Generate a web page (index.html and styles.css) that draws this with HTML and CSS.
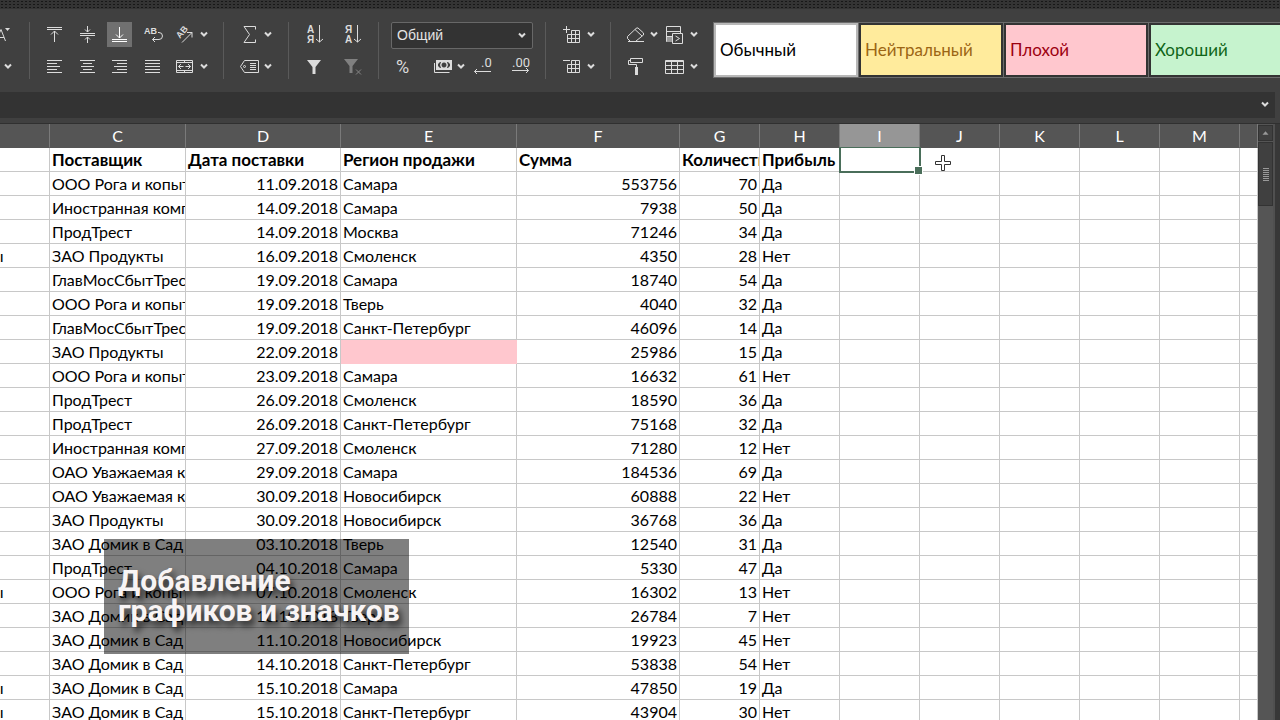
FILE: index.html
```
<!DOCTYPE html>
<html lang="ru">
  <head>
    <meta charset="UTF-8" />
    <title>Таблица продаж</title>
    <meta name="viewport" content="width=device-width, initial-scale=1.0" />
    <link rel="stylesheet" href="styles.css">
  </head>
  <body>
    <!-- shared chevron -->
    <svg class="defs">
      <symbol id="chev" viewBox="0 0 12 25"><path d="M3 10.500l3 3 3-3" stroke-width="2" /></symbol>
    </svg>

    <div class="window-top"></div>
    <div class="ribbon">
      <div class="group group-cut">
        <div class="row">
          <button class="drop" aria-label="Размер шрифта"><svg viewBox="0 0 12 25"><path d="M-4 19L1 7.500L5.500 19M-2 15.500H4" /><path class="fill" d="M5 6h5L7.500 9z" /></svg></button>
        </div>
        <div class="row">
          <button class="drop" aria-label="Ещё"><svg><use href="#chev" /></svg></button>
        </div>
      </div>

      <div class="group group-align">
        <div class="row">
          <button class="tool" aria-label="По верхнему краю"><svg viewBox="0 0 25 25"><path d="M6 5.500H21M6 7.500H21M13.500 20V9M10 12.500l3.500-3.500 3.500 3.500" /></svg></button>
          <button class="tool" aria-label="По середине"><svg viewBox="0 0 25 25"><path d="M6 11.500H21M6 13.500H21M13.500 4v6M11 7.500l2.500 2.500L16 7.500M13.500 21v-6M11 17.500l2.500-2.500 2.500 2.500" /></svg></button>
          <button class="tool active" aria-label="По нижнему краю"><svg viewBox="0 0 25 25"><path d="M5 17.500H20M5 19.500H20M12.500 5v11M9 12.500l3.500 3.500 3.500-3.500" /></svg></button>
          <button class="tool" aria-label="Перенос текста"><svg viewBox="0 0 25 25"><text x="4" y="12" class="t-small">AB</text><path d="M18 10.500h1a3 3 0 0 1 0 7H12.500M15 15l-2.500 2.500L15 20" /></svg></button>
          <div class="pair">
            <button class="tool" aria-label="Ориентация"><svg viewBox="0 0 25 25"><text x="7" y="17" class="t-small" transform="rotate(-50 7 17)">AB</text><path d="M9 20.500L19 10.500M14 10.500h5v5" /></svg></button>
            <button class="drop" aria-label="Ещё"><svg><use href="#chev" /></svg></button>
          </div>
        </div>
        <div class="row">
          <button class="tool" aria-label="По левому краю"><svg viewBox="0 0 25 25"><path d="M6 6.500h15M6 9.500h10M6 12.500h13M6 15.500h10M6 18.500h15" /></svg></button>
          <button class="tool" aria-label="По центру"><svg viewBox="0 0 25 25"><path d="M6 6.500h15M9 9.500h9M7 12.500h13M9 15.500h9M6 18.500h15" /></svg></button>
          <button class="tool" aria-label="По правому краю"><svg viewBox="0 0 25 25"><path d="M5 6.500h15M10 9.500h10M7 12.500h13M10 15.500h10M5 18.500h15" /></svg></button>
          <button class="tool" aria-label="По ширине"><svg viewBox="0 0 25 25"><path d="M5 6.500h15M5 9.500h15M5 12.500h15M5 15.500h15M5 18.500h15" /></svg></button>
          <div class="pair">
            <button class="tool" aria-label="Объединить"><svg viewBox="0 0 25 25"><path d="M3.500 6.500h16v12h-16zM3.500 8.500h16M3.500 16.500h16M11.500 6v2M11.500 17v2M5.500 12.500h5M8 10l-2.500 2.500L8 15M12.500 12.500h5M15 10l2.500 2.500L15 15" /></svg></button>
            <button class="drop" aria-label="Ещё"><svg><use href="#chev" /></svg></button>
          </div>
        </div>
      </div>

      <div class="group group-sum">
        <div class="row">
          <div class="pair">
            <button class="tool" aria-label="Сумма"><svg viewBox="0 0 25 25"><path d="M18.500 7.500V4.500H7L12.500 12.500L7 20.500H18.500V17.500" /></svg></button>
            <button class="drop" aria-label="Ещё"><svg><use href="#chev" /></svg></button>
          </div>
        </div>
        <div class="row">
          <div class="pair">
            <button class="tool" aria-label="Имена"><svg viewBox="0 0 25 25"><path d="M7.500 6.500h14v12h-14L3.500 12.500zM13 9.500h6M13 11.500h6M13 13.500h6M13 15.500h6" /><circle cx="7.500" cy="12.500" r="1" /></svg></button>
            <button class="drop" aria-label="Ещё"><svg><use href="#chev" /></svg></button>
          </div>
        </div>
      </div>

      <div class="group group-sort">
        <div class="row">
          <button class="tool" aria-label="По возрастанию"><svg viewBox="0 0 25 25"><text x="5" y="11" class="t-sort">А</text><text x="5" y="21" class="t-sort">Я</text><path d="M17.500 3v17M14 17l3.500 3 3.500-3" /></svg></button>
          <button class="tool" aria-label="По убыванию"><svg viewBox="0 0 25 25"><text x="6" y="11" class="t-sort">Я</text><text x="6" y="21" class="t-sort">А</text><path d="M18.500 3v17M15 17l3.500 3 3.500-3" /></svg></button>
        </div>
        <div class="row">
          <button class="tool" aria-label="Фильтр"><svg viewBox="0 0 25 25"><path class="fill" d="M5 6h14l-5.500 7v7h-3v-7z" /></svg></button>
          <button class="tool off" aria-label="Очистить фильтр"><svg viewBox="0 0 25 25"><path class="fill" d="M5 5h14l-5.500 7v7h-3v-7z" /><path d="M17 15.500l5 5M22 15.500l-5 5" /></svg></button>
        </div>
      </div>

      <div class="group group-format">
        <div class="row">
          <div class="format">
            <select aria-label="Числовой формат"><option>Общий</option></select>
            <svg><use href="#chev" /></svg>
          </div>
        </div>
        <div class="row">
          <button class="tool percent" aria-label="Процентный формат"><svg viewBox="0 0 25 25"><text x="5" y="19" class="t-percent">%</text></svg></button>
          <div class="pair">
            <button class="tool" aria-label="Денежный формат"><svg viewBox="0 0 25 25"><path class="fill" fill-rule="evenodd" d="M6 6h16v10H6zM8 10l2-2h1l-1 3 1 3h-1l-2-2zM20 10l-2-2h-1l1 3-1 3h1l2-2zM14 8.500a2.500 2.500 0 1 0 .01 0z" /><path d="M4.500 9V18.500H19.500" /></svg></button>
            <button class="drop" aria-label="Ещё"><svg><use href="#chev" /></svg></button>
          </div>
          <button class="tool" aria-label="Уменьшить разрядность"><svg viewBox="0 0 25 25"><text x="11" y="13" class="t-num">.0</text><path d="M21 17.500H4.500M7 15l-2.500 2.500L7 20" /></svg></button>
          <button class="tool last" aria-label="Увеличить разрядность"><svg viewBox="0 0 25 25"><text x="4" y="13" class="t-num">.00</text><path d="M4 16.500H20.500M18 14l2.500 2.500L18 19" /></svg></button>
        </div>
      </div>

      <div class="group group-cells">
        <div class="row">
          <div class="pair">
            <button class="tool" aria-label="Вставить ячейки"><svg viewBox="0 0 25 25"><path d="M3 7.500h7M6.500 4v7M11.500 8.500h8v12h-12v-8M7.500 12.500h12M7.500 16.500h12M11.500 8.500v12M15.500 8.500v12" /></svg></button>
            <button class="drop" aria-label="Ещё"><svg><use href="#chev" /></svg></button>
          </div>
        </div>
        <div class="row">
          <div class="pair">
            <button class="tool" aria-label="Удалить ячейки"><svg viewBox="0 0 25 25"><path d="M3 6.500h7M11.500 6.500h8v12h-12v-8M7.500 10.500h12M7.500 14.500h12M11.500 6.500v12M15.500 6.500v12" /></svg></button>
            <button class="drop" aria-label="Ещё"><svg><use href="#chev" /></svg></button>
          </div>
        </div>
      </div>

      <div class="group group-style">
        <div class="row">
          <div class="pair">
            <button class="tool" aria-label="Очистить"><svg viewBox="0 0 25 25"><path d="M5 19.500H21M7 19L4.500 16.500V14.500L13 6.500Q14 5.500 15 6L20.500 11V13L13 19M12 7.500l7 6.500" /></svg></button>
            <button class="drop" aria-label="Ещё"><svg><use href="#chev" /></svg></button>
          </div>
          <div class="pair">
            <button class="tool" aria-label="Условное форматирование"><svg viewBox="0 0 25 25"><path class="shade" d="M3 14h7v6H3z" /><path d="M17.500 11V4.500h-14V19.500M3.500 9.500h14M3.500 14.500h6M9.500 11.500h10v10h-10zM12.500 14l4 2.500-4 2.500" /></svg></button>
            <button class="drop" aria-label="Ещё"><svg><use href="#chev" /></svg></button>
          </div>
        </div>
        <div class="row">
          <button class="tool painter" aria-label="Формат по образцу"><svg viewBox="0 0 25 25"><path d="M7.500 4.500h12v4h-12zM7.500 6.500h-2v4h8V13" /><path class="fill" d="M12 13h3v8h-3z" /></svg></button>
          <div class="pair">
            <button class="tool" aria-label="Форматировать как таблицу"><svg viewBox="0 0 25 25"><path d="M2.500 6.500h18v13h-18zM2.500 7.500h18M2.500 11.500h18M2.500 15.500h18M8.500 7v12M14.500 7v12" /></svg></button>
            <button class="drop" aria-label="Ещё"><svg><use href="#chev" /></svg></button>
          </div>
        </div>
      </div>

      <div class="styles">
        <button class="style normal">Обычный</button>
        <button class="style neutral">Нейтральный</button>
        <button class="style bad">Плохой</button>
        <button class="style good">Хороший</button>
      </div>
    </div>

    <div class="formula">
      <button class="drop" aria-label="Развернуть строку формул"><svg><use href="#chev" /></svg></button>
    </div>

    <div class="work">
      <div class="sheet">
        <table>
          <colgroup>
            <col class="w-b"><col class="w-c"><col class="w-d"><col class="w-e"><col class="w-f">
            <col class="w-g"><col class="w-g"><col class="w-g"><col class="w-g"><col class="w-g"><col class="w-g"><col class="w-g">
            <col>
          </colgroup>
          <thead>
            <tr>
              <th></th><th>C</th><th>D</th><th>E</th><th>F</th><th>G</th><th>H</th>
              <th class="current">I</th><th>J</th><th>K</th><th>L</th><th>M</th><th></th>
            </tr>
          </thead>
          <tbody id="rows">
            <tr class="titles">
              <td></td><td>Поставщик</td><td>Дата поставки</td><td>Регион продажи</td><td>Сумма</td><td>Количество</td><td>Прибыль</td>
              <td class="selected"></td><td></td><td></td><td></td><td></td><td></td>
            </tr>
          </tbody>
        </table>
        <svg class="cursor" viewBox="0 0 18 18"><path d="M7.500 1.500h3v6h6v3h-6v6h-3v-6h-6v-3h6z" /></svg>
        <div class="caption">Добавление<br />графиков и значков</div>
      </div>
      <div class="scroll">
        <button class="scroll-up" aria-label="Вверх"><svg viewBox="0 0 15 15"><path d="M4 9h7L7.500 5z" /></svg></button>
        <div class="thumb"><span class="grip"></span></div>
      </div>
      <div class="edge"></div>
    </div>

    <script src="script.js"></script>
  </body>
</html>
```
FILE: styles.css
```
* {
  box-sizing: border-box;
}

body {
  margin: 0;
  height: 100vh;
  overflow: hidden;
  display: flex;
  flex-direction: column;
  background-color: #404040;
  font-family: Lato, "Noto Sans", sans-serif;
  font-size: 16px;
}

button {
  padding: 0;
  border: none;
  background: none;
  font: inherit;
}

svg {
  display: block;
  fill: none;
  stroke: #dcdcdc;
}

.defs {
  position: absolute;
  width: 0;
  height: 0;
}

.window-top {
  flex: none;
  height: 9px;
  background-color: #343434;
  background-image: radial-gradient(#181818 1px, transparent 1px);
  background-size: 4px 3px;
}

/* ribbon */
.ribbon {
  flex: none;
  display: flex;
  align-items: flex-start;
  padding: 13px 0;
  overflow: hidden;
}

.group {
  flex: none;
  display: flex;
  flex-direction: column;
  gap: 7px;
  border-right: 1px solid #5a5a5a;
}

.row {
  display: flex;
  height: 25px;
}

.pair {
  display: flex;
}

.tool,
.tool svg {
  width: 25px;
  height: 25px;
}

.drop,
.drop svg {
  width: 12px;
  height: 25px;
}

.tool.active {
  background-color: #707070;
}

.active svg {
  stroke: #fff;
}

.off svg {
  stroke: #858585;
}

.fill {
  fill: #dcdcdc;
  stroke: none;
}

.off .fill {
  fill: #808080;
}

.shade {
  fill: #999;
  stroke: none;
}

.ribbon text {
  fill: #dcdcdc;
  stroke: none;
  font-family: "Liberation Sans", sans-serif;
}

.ribbon .t-small {
  font-size: 9px;
  font-weight: bold;
}

.ribbon .t-sort {
  font-size: 10px;
  font-weight: bold;
}

.ribbon .t-percent {
  font-family: Roboto, sans-serif;
  font-size: 18px;
}

.ribbon .t-num {
  font-family: Roboto, sans-serif;
  font-size: 13px;
}

.group-cut {
  width: 30px;
}

.group-cut .row {
  padding-left: 2px;
}

.group-cut .row:first-child {
  padding-left: 0;
}

.group-align {
  padding: 0 13px 0 11px;
}

.group-align .row {
  gap: 8px;
}

.group-sum {
  padding: 0 14px 0 13px;
}

.group-sort {
  padding: 0 14px 0 13px;
}

.group-sort .row {
  gap: 12px;
}

.group-format {
  padding: 0 12px;
}

.group-format .row,
.group-style .row {
  gap: 3px;
}

.percent {
  margin-right: 11px;
}

.last {
  margin-left: auto;
}

.painter {
  margin-right: 12px;
}

.format {
  position: relative;
  width: 142px;
}

.format select {
  width: 100%;
  height: 27px;
  padding: 0 5px 1px;
  appearance: none;
  border: 1px solid #686868;
  border-radius: 2px;
  background-color: #333;
  color: #e4e4e4;
  font-family: "Liberation Sans", sans-serif;
  font-size: 14px;
}

.format svg {
  position: absolute;
  top: 1px;
  right: 5px;
  width: 12px;
  height: 25px;
  pointer-events: none;
}

.group-cells {
  padding: 0 13px 0 14px;
}

.group-style {
  padding: 0 13px 0 12px;
  border-right: none;
}

.styles {
  flex: none;
  display: flex;
  gap: 1px;
  border: 1px solid #6c6c6c;
  background-color: #6c6c6c;
}

.style {
  width: 144px;
  height: 54px;
  padding: 0 4px 2px;
  border: 2px solid #333;
  font-size: 17px;
  text-align: left;
}

.normal {
  background-color: #fff;
  border-color: #b8b8b8;
  color: #000;
}

.neutral {
  background-color: #ffeb9c;
  color: #9c6514;
}

.bad {
  background-color: #ffc7ce;
  color: #9c0010;
}

.good {
  background-color: #c6f3ce;
  color: #106518;
}

/* formula bar */
.formula {
  flex: none;
  display: flex;
  justify-content: flex-end;
  height: 26px;
  margin-right: 5px;
  padding-right: 4px;
  background-color: #333;
}

/* sheet */
.work {
  flex: 1;
  min-height: 0;
  display: flex;
  margin-top: 5px;
  border-top: 1px solid #303030;
}

.sheet {
  position: relative;
  flex: 1;
  min-width: 0;
  overflow: hidden;
  background-color: #fff;
}

table {
  width: 100%;
  table-layout: fixed;
  border-collapse: separate;
  border-spacing: 0;
}

.w-b { width: 50px; }
.w-c { width: 136px; }
.w-d { width: 155px; }
.w-e { width: 176px; }
.w-f { width: 163px; }
.w-g { width: 80px; }

th,
td {
  height: 24px;
  padding: 0 2px;
  border-right: 1px solid #c8c8c8;
  border-bottom: 1px solid #c8c8c8;
  line-height: 23px;
  white-space: nowrap;
  overflow: hidden;
}

th {
  background-color: #555;
  border-right-color: #7a7a7a;
  border-bottom-color: #555;
  color: #fff;
  font-weight: normal;
}

th.current {
  background-color: #969696;
  border-bottom-color: #969696;
}

td {
  color: #000;
}

.titles td {
  font-size: 17px;
  font-weight: bold;
}

.num {
  text-align: right;
}

/* tail of a long value scrolled off to the left */
.tail {
  text-indent: -10px;
}

td.empty {
  background-color: #ffc7ce;
  border-color: #ffc7ce;
}

td.selected {
  position: relative;
  overflow: visible;
}

.selected::before {
  content: "";
  position: absolute;
  inset: -1px -2px -2px -1px;
  border: 2px solid #4a6e5a;
  border-top-width: 1px;
}

.selected::after {
  content: "";
  position: absolute;
  right: -4px;
  bottom: -4px;
  width: 7px;
  height: 7px;
  border: 1px solid #fff;
  background-color: #4a6e5a;
}

.cursor {
  position: absolute;
  left: 934px;
  top: 30px;
  width: 18px;
  height: 18px;
  fill: #fff;
  stroke: #333;
}

.caption {
  position: absolute;
  left: 104px;
  top: 415px;
  padding: 27px 9px 28px 14px;
  background-color: rgba(0, 0, 0, 0.5);
  color: #f8f4f4;
  font-family: Roboto, sans-serif;
  font-size: 30px;
  font-weight: bold;
  line-height: 30px;
  white-space: nowrap;
  text-shadow: 3px 5px 6px rgba(0, 0, 0, 0.7);
}

/* scrollbar */
.scroll {
  flex: none;
  display: flex;
  flex-direction: column;
  gap: 1px;
  width: 15px;
  padding-top: 1px;
  background-color: #555;
}

.scroll-up {
  height: 16px;
  border: 1px solid #333;
  background-color: #404040;
}

.scroll-up svg {
  width: 13px;
  height: 13px;
  fill: #999;
  stroke: none;
}

.thumb {
  display: flex;
  align-items: center;
  justify-content: center;
  height: 64px;
  border: 1px solid #333;
  background-color: #404040;
}

.grip {
  width: 6px;
  height: 13px;
  background: repeating-linear-gradient(#999 0 1px, #404040 1px 2px);
}

.edge {
  flex: none;
  width: 7px;
  border-left: 2px solid #505050;
  background-color: #383838;
}
```
FILE: script.js
```
// B tail, supplier, date, region, sum, count, profit
const data = [
  ["", "ООО Рога и копыта", "11.09.2018", "Самара", 553756, 70, "Да"],
  ["", "Иностранная компания", "14.09.2018", "Самара", 7938, 50, "Да"],
  ["", "ПродТрест", "14.09.2018", "Москва", 71246, 34, "Да"],
  ["ы", "ЗАО Продукты", "16.09.2018", "Смоленск", 4350, 28, "Нет"],
  ["", "ГлавМосСбытТрест", "19.09.2018", "Самара", 18740, 54, "Да"],
  ["", "ООО Рога и копыта", "19.09.2018", "Тверь", 4040, 32, "Да"],
  ["", "ГлавМосСбытТрест", "19.09.2018", "Санкт-Петербург", 46096, 14, "Да"],
  ["", "ЗАО Продукты", "22.09.2018", "", 25986, 15, "Да"],
  ["", "ООО Рога и копыта", "23.09.2018", "Самара", 16632, 61, "Нет"],
  ["", "ПродТрест", "26.09.2018", "Смоленск", 18590, 36, "Да"],
  ["", "ПродТрест", "26.09.2018", "Санкт-Петербург", 75168, 32, "Да"],
  ["", "Иностранная компания", "27.09.2018", "Смоленск", 71280, 12, "Нет"],
  ["", "ОАО Уважаемая компания", "29.09.2018", "Самара", 184536, 69, "Да"],
  ["", "ОАО Уважаемая компания", "30.09.2018", "Новосибирск", 60888, 22, "Нет"],
  ["", "ЗАО Продукты", "30.09.2018", "Новосибирск", 36768, 36, "Да"],
  ["", "ЗАО Домик в Сад", "03.10.2018", "Тверь", 12540, 31, "Да"],
  ["", "ПродТрест", "04.10.2018", "Самара", 5330, 47, "Да"],
  ["ы", "ООО Рога и копыта", "07.10.2018", "Смоленск", 16302, 13, "Нет"],
  ["", "ЗАО Домик в Сад", "10.10.2018", "Тверь", 26784, 7, "Нет"],
  ["", "ЗАО Домик в Сад", "11.10.2018", "Новосибирск", 19923, 45, "Нет"],
  ["", "ЗАО Домик в Сад", "14.10.2018", "Санкт-Петербург", 53838, 54, "Нет"],
  ["ы", "ЗАО Домик в Сад", "15.10.2018", "Самара", 47850, 19, "Да"],
  ["ы", "ЗАО Домик в Сад", "15.10.2018", "Санкт-Петербург", 43904, 30, "Нет"],
];

const classes = ["tail", "", "num", "", "num", "num", ""];

document.getElementById("rows").innerHTML += data
  .map((row) => {
    const cells = row.map((value, i) => {
      const cls = i === 3 && !value ? "empty" : classes[i];
      return `<td class="${cls}">${value}</td>`;
    });
    return `<tr>${cells.join("")}${"<td></td>".repeat(6)}</tr>`;
  })
  .join("");
```
